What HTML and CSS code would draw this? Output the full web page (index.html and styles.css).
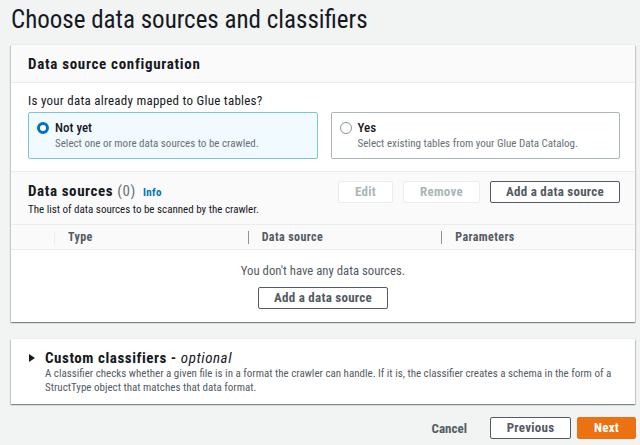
FILE: index.html
```html
<!DOCTYPE html>
<html lang="en">
<head>
<meta charset="utf-8">
<title>Choose data sources and classifiers</title>
<link rel="stylesheet" href="styles.css">
</head>
<body>
<main class="page">
  <h1 class="page-title">Choose data sources and classifiers</h1>

  <section class="card">
    <header class="card-header">
      <h2 class="card-title">Data source configuration</h2>
    </header>
    <div class="config-body">
      <p class="question">Is your data already mapped to Glue tables?</p>
      <div class="tiles">
        <label class="tile tile-selected">
          <span class="radio radio-on"></span>
          <span class="tile-text">
            <span class="tile-label">Not yet</span>
            <span class="tile-desc">Select one or more data sources to be crawled.</span>
          </span>
        </label>
        <label class="tile">
          <span class="radio"></span>
          <span class="tile-text">
            <span class="tile-label">Yes</span>
            <span class="tile-desc">Select existing tables from your Glue Data Catalog.</span>
          </span>
        </label>
      </div>
    </div>

    <div class="sources-header">
      <div class="sources-heading">
        <h2 class="sources-title">Data sources <span class="count">(0)</span> <a class="info">Info</a></h2>
        <p class="sources-desc">The list of data sources to be scanned by the crawler.</p>
      </div>
      <div class="actions">
        <button class="btn btn-disabled btn-edit">Edit</button>
        <button class="btn btn-disabled btn-remove">Remove</button>
        <button class="btn btn-add">Add a data source</button>
      </div>
    </div>

    <div class="table-head">
      <div class="th th-select"></div>
      <div class="th"><span class="th-label">Type</span></div>
      <div class="th"><span class="th-label">Data source</span></div>
      <div class="th"><span class="th-label">Parameters</span></div>
    </div>
    <div class="empty">
      <p class="empty-text">You don't have any data sources.</p>
      <button class="btn btn-empty-add">Add a data source</button>
    </div>
  </section>

  <section class="card card-expand">
    <span class="caret"></span>
    <div class="expand-text">
      <h2 class="expand-title">Custom classifiers - <em>optional</em></h2>
      <p class="expand-desc">A classifier checks whether a given file is in a format the crawler can handle. If it is, the classifier creates a schema in the form of a StructType object that matches that data format.</p>
    </div>
  </section>

  <footer class="footer">
    <button class="link-btn">Cancel</button>
    <button class="btn btn-prev">Previous</button>
    <button class="btn btn-primary">Next</button>
  </footer>
</main>
</body>
</html>
```
FILE: styles.css
```css
* { box-sizing: border-box; }

body {
  margin: 0;
  background: #f2f3f3;
  font-family: "Roboto Condensed", "Open Sans", "Liberation Sans", sans-serif;
  color: #16191f;
}

.page {
  padding: 0 5px 0 11px;
}

.page-title {
  margin: 4px 0 9px;
  font-size: 25px;
  line-height: 32px;
  font-weight: 400;
  color: #16191f;
}

.card {
  background: #fff;
  box-shadow: 0 1px 1px 0 rgba(0, 28, 36, 0.3), 1px 1px 1px 0 rgba(0, 28, 36, 0.15), -1px 1px 1px 0 rgba(0, 28, 36, 0.15), 0 -1px 0 0 #eaeded;
}

.card-header {
  background: #fafafa;
  border-bottom: 1px solid #eaeded;
  height: 38px;
  padding: 0 17px;
  display: flex;
  align-items: center;
}

.card-title {
  margin: 0;
  font-size: 15px;
  font-weight: 700;
  line-height: 20px;
  letter-spacing: 0.7px;
}

.config-body {
  padding: 10px 15px 12px 17px;
}

.question {
  margin: 0 0 3px;
  font-size: 13px;
  line-height: 16px;
  letter-spacing: 0.25px;
}

.tiles {
  display: grid;
  grid-template-columns: 1fr 1fr;
  gap: 13px;
}

.tile {
  display: flex;
  align-items: flex-start;
  gap: 6px;
  border: 1px solid #aab7b8;
  border-radius: 2px;
  padding: 7px 8px 6px 8px;
  height: 47px;
}

.tile-selected {
  background: #f1faff;
  border-color: #7cc4e2;
}

.radio {
  flex: none;
  width: 12px;
  height: 12px;
  margin-top: 2px;
  border-radius: 50%;
  border: 1px solid #879596;
  background: #fff;
}

.radio-on {
  border: 3.5px solid #0073bb;
}

.tile-text {
  display: flex;
  flex-direction: column;
}

.tile-label {
  font-size: 13px;
  line-height: 16px;
  font-weight: 500;
}

.tile-desc {
  font-size: 11px;
  line-height: 16px;
  color: #687078;
}

.sources-header {
  background: #fafafa;
  border-top: 1px solid #eaeded;
  padding: 9px 15px 7px 17px;
  display: flex;
  justify-content: space-between;
  align-items: flex-start;
}

.sources-title {
  margin: 0;
  font-size: 15px;
  line-height: 21px;
  font-weight: 700;
  letter-spacing: 0.6px;
}

.count {
  font-weight: 400;
  color: #687078;
}

.info {
  font-size: 11px;
  color: #0073bb;
  font-weight: 700;
  margin-left: 3px;
  letter-spacing: 0.3px;
}

.sources-desc {
  margin: 0;
  font-size: 11px;
  line-height: 14px;
  color: #16191f;
}

.actions {
  display: flex;
  gap: 10px;
}

.btn {
  font-family: inherit;
  font-size: 13px;
  font-weight: 700;
  letter-spacing: 0.25px;
  height: 22px;
  padding: 0;
  border: 1px solid #545b64;
  border-radius: 2px;
  background: #fff;
  color: #545b64;
  line-height: 20px;
}

.btn-disabled {
  border-color: #eaeded;
  color: #aab7b8;
}

.btn-edit { width: 55px; }
.btn-remove { width: 77px; }
.btn-add { width: 130px; }

.table-head {
  display: grid;
  grid-template-columns: 43px 1fr 1fr 1fr;
  background: #fafafa;
  border-top: 1px solid #eaeded;
  border-bottom: 1px solid #eaeded;
  height: 26px;
  align-items: center;
}

.th {
  height: 13px;
  display: flex;
  align-items: center;
  border-left: 1px solid #879596;
  padding-left: 13px;
}

.th-select {
  border-left: none;
}

.th:nth-child(2) {
  border-left-color: #eaeded;
}

.th-label {
  font-size: 12px;
  font-weight: 700;
  color: #545b64;
  line-height: 16px;
  letter-spacing: 0.4px;
}

.empty {
  display: flex;
  flex-direction: column;
  align-items: center;
  padding: 13px 0 13px;
}

.empty-text {
  margin: 0 0 8px;
  font-size: 12.75px;
  line-height: 16px;
  color: #545b64;
}

.btn-empty-add {
  width: 130px;
}

.card-expand {
  margin-top: 17px;
  display: flex;
  align-items: flex-start;
  gap: 10px;
  padding: 10px 20px 9px 18px;
}

.caret {
  flex: none;
  width: 0;
  height: 0;
  margin-top: 5px;
  border-top: 4px solid transparent;
  border-bottom: 4px solid transparent;
  border-left: 6px solid #16191f;
}

.expand-title {
  margin: 0;
  font-size: 15px;
  line-height: 18px;
  font-weight: 700;
  letter-spacing: 0.55px;
}

.expand-title em {
  font-weight: 400;
}

.expand-desc {
  margin: 0;
  font-size: 11px;
  line-height: 14px;
  color: #545b64;
}

.footer {
  margin-top: 13px;
  display: flex;
  justify-content: flex-end;
  align-items: center;
  margin-right: -1px;
}

.link-btn {
  font-family: inherit;
  background: none;
  border: none;
  font-size: 13px;
  font-weight: 700;
  color: #545b64;
  padding: 0;
  margin-right: 23px;
}

.btn-prev {
  width: 81px;
  margin-right: 6px;
}

.btn-primary {
  width: 59px;
  background: #ec7211;
  border-color: #ec7211;
  color: #fff;
}
```
